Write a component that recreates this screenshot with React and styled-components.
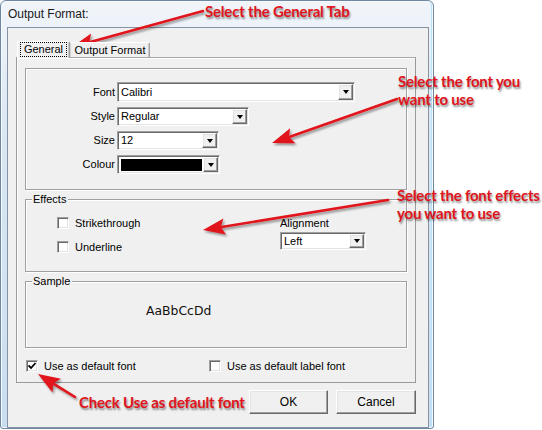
import styled, { createGlobalStyle } from "styled-components";

const GlobalStyle = createGlobalStyle`
  body {
    margin: 0;
    background: #ffffff;
    font-family: "Liberation Sans", Arial, sans-serif;
  }
`;

const Page = styled.div`
  position: relative;
  width: 542px;
  height: 430px;
  background: #ffffff;
  overflow: hidden;
`;

const Window = styled.div`
  width: 432px;
  height: 427px;
  border: 1px solid #6f87a3;
  border-radius: 6px 6px 3px 3px;
  background: linear-gradient(to bottom, #f1f5fa 0%, #dae7f4 30%, #c9def2 100%);
  box-shadow: inset 0 0 0 1px #f6fafd, inset -2px 0 #b8e2f5;
  display: flex;
  flex-direction: column;
`;

const TitleBar = styled.div`
  height: 26px;
  padding-left: 7px;
  display: flex;
  align-items: center;
  font-size: 12px;
  color: #1a1a1a;
`;

const Client = styled.div`
  margin: 0 4px 0 6px;
  height: 393px;
  border: 1px solid #8593a4;
  background: #f0f0f0;
  padding: 12px 0 0 8px;
  font-size: 11px;
  color: #000;
`;

const TabRow = styled.div`
  display: flex;
  align-items: flex-end;
  height: 17px;
  padding-left: 1px;
`;

const Tab = styled.div`
  height: ${(p) => (p.$active ? 17 : 15)}px;
  width: ${(p) => p.$w}px;
  box-sizing: border-box;
  border: 1px solid #a0a0a0;
  border-bottom: none;
  border-left-color: ${(p) => (p.$active ? "#ffffff" : "#d0d0d0")};
  border-top-color: #ffffff;
  border-radius: 2px 2px 0 0;
  box-shadow: inset -1px 0 #c8c8c8;
  display: flex;
  align-items: center;
  justify-content: center;
  background: #f0f0f0;
  position: relative;
  z-index: ${(p) => (p.$active ? 2 : 1)};
  margin-bottom: ${(p) => (p.$active ? -1 : 0)}px;
`;

const Focus = styled.span`
  outline: 1px dotted #000;
  outline-offset: 0;
  padding: 0 3px;
  line-height: 13px;
`;

const Panel = styled.div`
  width: 400px;
  height: 326px;
  box-sizing: border-box;
  border: 1px solid #9a9a9a;
  border-top-color: #a8a8a8;
  box-shadow: inset 1px 1px #ffffff;
  padding: 10px 8px 0 8px;
  display: flex;
  flex-direction: column;
`;

const Group = styled.div`
  height: ${(p) => p.$h}px;
  margin-top: ${(p) => p.$mt || 0}px;
  box-sizing: border-box;
  border: 1px solid #a0a0a0;
  box-shadow: inset 1px 1px #ffffff, 1px 1px #ffffff;
  padding-top: ${(p) => p.$pt || 0}px;
`;

const GroupLabel = styled.div`
  width: fit-content;
  margin: -7px 0 0 6px;
  padding: 0 2px 0 1px;
  background: #f0f0f0;
  line-height: 13px;
`;

const FieldGrid = styled.div`
  display: grid;
  grid-template-columns: 89px auto;
  column-gap: 2px;
  row-gap: 5px;
  align-items: center;
`;

const FieldLabel = styled.div`
  text-align: right;
`;

const Combo = styled.div`
  width: ${(p) => p.$w}px;
  height: ${(p) => p.$h || 19}px;
  box-sizing: border-box;
  background: #ffffff;
  border: 1px solid;
  border-color: #a0a0a0 #ffffff #ffffff #a0a0a0;
  box-shadow: inset 1px 1px #696969, inset -1px -1px #e3e3e3;
  display: flex;
  align-items: stretch;
  padding: 1px;
`;

const ComboValue = styled.div`
  flex: 1;
  display: flex;
  align-items: center;
  padding-left: 2px;
`;

const Swatch = styled.div`
  flex: 1;
  margin: 2px 1px 1px 2px;
  background: #000000;
`;

const ArrowButton = styled.div`
  width: 15px;
  box-sizing: border-box;
  background: #f0f0f0;
  border: 1px solid;
  border-color: #ffffff #696969 #696969 #ffffff;
  box-shadow: inset -1px -1px #a0a0a0, inset 1px 1px #e3e3e3;
  display: flex;
  align-items: center;
  justify-content: center;

  &::after {
    content: "";
    border-left: 3.5px solid transparent;
    border-right: 3.5px solid transparent;
    border-top: 4px solid #000;
    margin-top: 1px;
  }
`;

const EffectsBody = styled.div`
  display: grid;
  grid-template-columns: 254px auto;
  padding-top: 11px;
`;

const CheckList = styled.div`
  display: flex;
  flex-direction: column;
  gap: 11px;
  padding-left: 31px;
`;

const CheckRow = styled.label`
  display: flex;
  align-items: center;
  gap: 6px;
  line-height: 13px;
`;

const Box = styled.span`
  width: 12px;
  height: 12px;
  box-sizing: border-box;
  background: #ffffff;
  border: 1px solid;
  border-color: #a0a0a0 #ffffff #ffffff #a0a0a0;
  box-shadow: inset 1px 1px #696969, inset -1px -1px #e3e3e3;
  display: flex;
  align-items: center;
  justify-content: center;
`;

const AlignCol = styled.div`
  display: flex;
  flex-direction: column;
  gap: 3px;
  margin-top: 0;
`;

const SampleText = styled.div`
  padding: 15px 0 0 120px;
  font-family: "DejaVu Sans", Verdana, sans-serif;
  font-size: 12.4px;
  color: #111;
`;

const DefaultsRow = styled.div`
  display: grid;
  grid-template-columns: 183px auto;
  margin-top: 12px;
  padding-left: 1px;
`;

const ButtonRow = styled.div`
  display: flex;
  gap: 8px;
  width: 400px;
  justify-content: flex-end;
  margin-top: 7px;
`;

const Button = styled.div`
  width: ${(p) => p.$w}px;
  height: 24px;
  box-sizing: border-box;
  background: #f0f0f0;
  border: 1px solid;
  border-color: #ffffff #696969 #696969 #ffffff;
  box-shadow: inset -1px -1px #a0a0a0, inset 1px 1px #e3e3e3;
  display: flex;
  align-items: center;
  justify-content: center;
  font-size: 12px;
`;

const Notes = styled.div`
  position: absolute;
  inset: 0;
  pointer-events: none;
`;

const Note = styled.div`
  position: absolute;
  left: ${(p) => p.$x}px;
  top: ${(p) => p.$y}px;
  font-family: Lato, "Open Sans", sans-serif;
  font-weight: 700;
  font-size: 15px;
  line-height: 18px;
  letter-spacing: -0.2px;
  color: #e0141c;
  text-shadow: 1px 2px 2px rgba(0, 0, 0, 0.45);
  white-space: nowrap;
`;

const Overlay = styled.svg`
  position: absolute;
  left: 0;
  top: 0;
`;

function Check({ checked, children }) {
  return (
    <CheckRow>
      <Box>
        {checked && (
          <svg width="8" height="8" viewBox="0 0 8 8">
            <path d="M0.5 3.5 L3 6 L7.5 1" stroke="#000" strokeWidth="1.8" fill="none" />
          </svg>
        )}
      </Box>
      {children}
    </CheckRow>
  );
}

function Arrow({ x1, y1, x2, y2 }) {
  const dx = x2 - x1;
  const dy = y2 - y1;
  const len = Math.hypot(dx, dy);
  const ux = dx / len;
  const uy = dy / len;
  const hl = 22;
  const hw = 8;
  const bx = x2 - ux * hl;
  const by = y2 - uy * hl;
  const head = `${x2},${y2} ${bx - uy * hw},${by + ux * hw} ${bx + ux * 4},${by + uy * 4} ${bx + uy * hw},${by - ux * hw}`;
  return (
    <g filter="url(#shadow)">
      <line x1={x1} y1={y1} x2={bx + ux * 3} y2={by + uy * 3} stroke="#e0141c" strokeWidth="2.6" strokeLinecap="round" />
      <polygon points={head} fill="#e0141c" />
    </g>
  );
}

export default function App() {
  return (
    <Page>
      <GlobalStyle />
      <Window>
        <TitleBar>Output Format:</TitleBar>
        <Client>
          <TabRow>
            <Tab $active $w={53}>
              <Focus>General</Focus>
            </Tab>
            <Tab $w={80}>Output Format</Tab>
          </TabRow>
          <Panel>
            <Group $h={122} $pt={13}>
              <FieldGrid>
                <FieldLabel>Font</FieldLabel>
                <Combo $w={238} $h={20}>
                  <ComboValue>Calibri</ComboValue>
                  <ArrowButton />
                </Combo>
                <FieldLabel>Style</FieldLabel>
                <Combo $w={132}>
                  <ComboValue>Regular</ComboValue>
                  <ArrowButton />
                </Combo>
                <FieldLabel>Size</FieldLabel>
                <Combo $w={102}>
                  <ComboValue>12</ComboValue>
                  <ArrowButton />
                </Combo>
                <FieldLabel>Colour</FieldLabel>
                <Combo $w={103}>
                  <Swatch />
                  <ArrowButton />
                </Combo>
              </FieldGrid>
            </Group>
            <Group $h={73} $mt={9}>
              <GroupLabel>Effects</GroupLabel>
              <EffectsBody>
                <CheckList>
                  <Check>Strikethrough</Check>
                  <Check>Underline</Check>
                </CheckList>
                <AlignCol>
                  <div>Alignment</div>
                  <Combo $w={86} $h={18}>
                    <ComboValue>Left</ComboValue>
                    <ArrowButton />
                  </Combo>
                </AlignCol>
              </EffectsBody>
            </Group>
            <Group $h={67} $mt={9}>
              <GroupLabel>Sample</GroupLabel>
              <SampleText>AaBbCcDd</SampleText>
            </Group>
            <DefaultsRow>
              <Check checked>Use as default font</Check>
              <Check>Use as default label font</Check>
            </DefaultsRow>
          </Panel>
          <ButtonRow>
            <Button $w={79}>OK</Button>
            <Button $w={80}>Cancel</Button>
          </ButtonRow>
        </Client>
      </Window>
      <Notes>
        <Overlay width="542" height="430">
          <defs>
            <filter id="shadow" x="-20%" y="-50%" width="140%" height="200%">
              <feDropShadow dx="1.5" dy="2" stdDeviation="1.2" floodColor="#000" floodOpacity="0.4" />
            </filter>
          </defs>
          <Arrow x1={203} y1={11} x2={72} y2={47} />
          <Arrow x1={397} y1={99} x2={272} y2={143} />
          <Arrow x1={388} y1={200} x2={203} y2={230} />
          <Arrow x1={75} y1={397} x2={38} y2={374} />
        </Overlay>
        <Note $x={205} $y={2}>Select the General Tab</Note>
        <Note $x={398} $y={72}>
          Select the font you
          <br />
          want to use
        </Note>
        <Note $x={397} $y={186}>
          Select the font effects
          <br />
          you want to use
        </Note>
        <Note $x={79} $y={393}>Check Use as default font</Note>
      </Notes>
    </Page>
  );
}
